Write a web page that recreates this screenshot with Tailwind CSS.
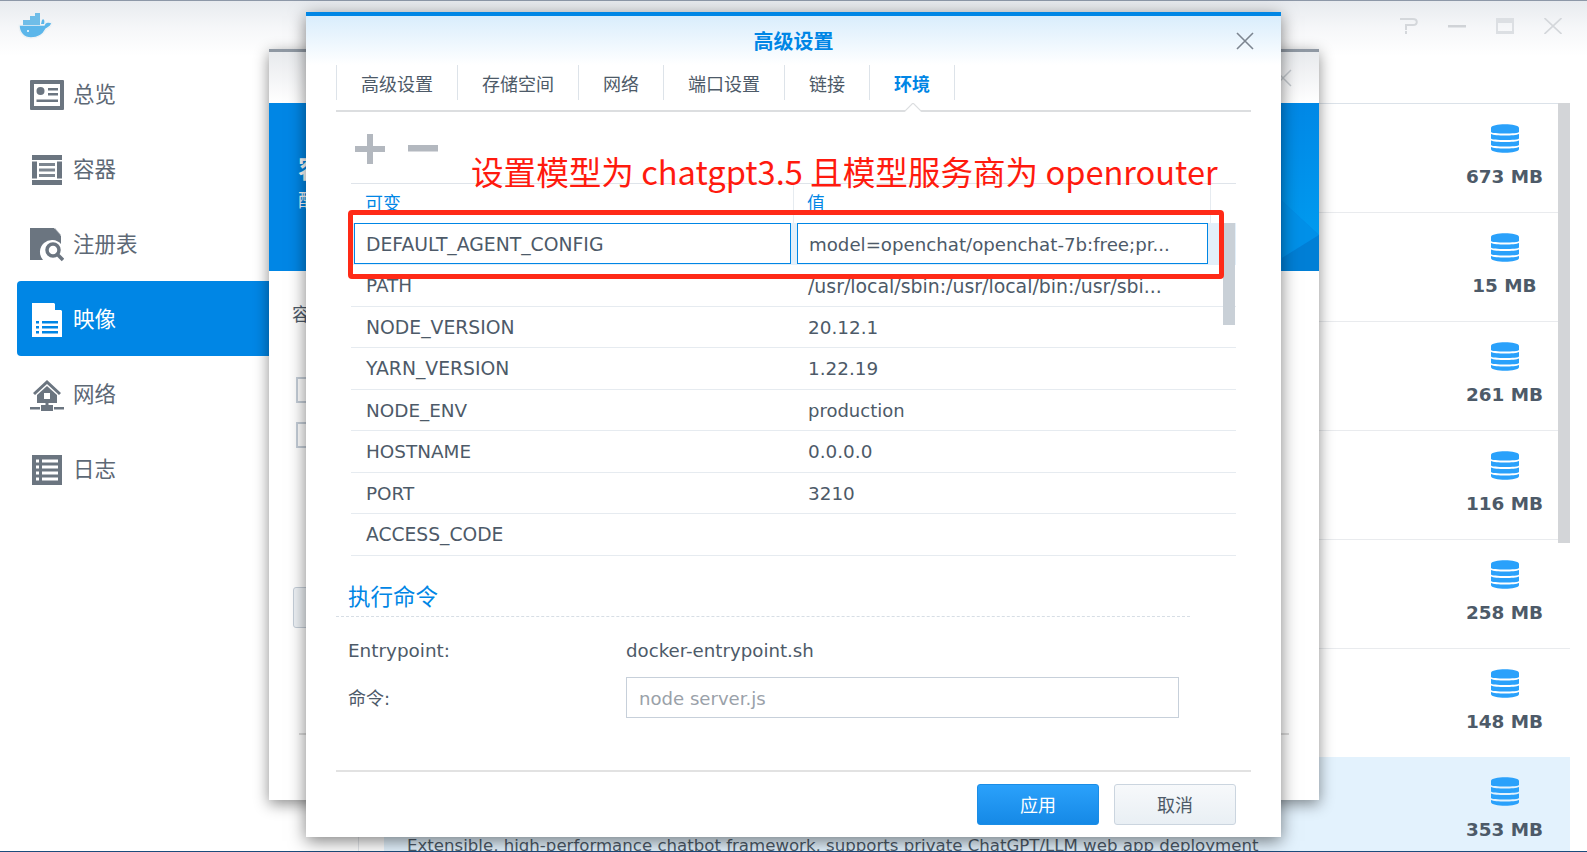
<!DOCTYPE html>
<html lang="zh-CN">
  <head>
    <meta charset="UTF-8" />
    <script src="https://cdn.jsdelivr.net/npm/@tailwindcss/browser@4"></script>
    <title>Docker - 高级设置</title>
  </head>

  <body class="relative w-[1587px] h-[852px] overflow-hidden bg-white text-[18.4px] text-[#4d5a68] font-['DejaVu_Sans','Noto_Sans_CJK_SC',sans-serif]">
    <!-- app title bar -->
    <div class="h-[56px] pb-[6px] border-t border-[#8d98a8] bg-gradient-to-b from-[#e8ebef] via-[#f6f7f9] to-white flex items-center justify-between pl-[18px] pr-[25px]">
      <svg width="35" height="26" viewBox="0 0 35 26">
        <path d="M1 12 H26 C27 9 31 8 34 10 C33 14 30 15 28 16 C25 22 19 25 13 25 C6 25 1 20 1 12 Z" fill="#5cb6ea" stroke="#eef2f5" stroke-width="1.5" />
        <path d="M5 7 H12 V3 H17 V0 H22 V12 H5 Z" fill="#6fbde8" />
        <path d="M24 7 C26 5 27 8 26 11 H23 Z" fill="#5cb6ea" />
        <circle cx="10" cy="18" r="1" fill="#fff" />
      </svg>
      <div class="flex items-center gap-[30px]">
        <svg width="18" height="16" viewBox="0 0 18 16" fill="none" stroke="#d4d7db" stroke-width="2">
          <path d="M0 1 H13 C18 1 18 7 13 7 H6 V12" />
          <path d="M6 13 V16" />
        </svg>
        <svg width="18" height="16" viewBox="0 0 18 16"><rect y="7" width="18" height="2.5" fill="#d0d3d7" /></svg>
        <svg width="18" height="16" viewBox="0 0 18 16">
          <path d="M0 0 H18 V16 H0 Z M2 5 V13 H16 V5 Z" fill="#dcdfe3" fill-rule="evenodd" />
        </svg>
        <svg width="18" height="16" viewBox="0 0 18 16" fill="none" stroke="#d4d7db" stroke-width="1.6">
          <path d="M0.5 0 L17.5 16 M17.5 0 L0.5 16" />
        </svg>
      </div>
    </div>

    <div class="flex h-[795px]">
      <!-- sidebar -->
      <nav class="w-[269px] shrink-0 pl-[17px] text-[21.5px] text-[#5d6875]">
        <a class="h-[75px] pl-[13px] flex items-center gap-[9px]">
          <svg class="mt-[2px]" width="34" height="34" viewBox="0 0 34 34">
            <rect y="2" width="34" height="30" rx="1" fill="#6b7580" />
            <rect x="4" y="6" width="26" height="22" fill="#fff" />
            <circle cx="10.5" cy="13" r="4" fill="#6b7580" />
            <path d="M18 10 H28 V12.5 H18 Z M18 15 H28 V17.5 H18 Z M6.5 21.5 H28 V24 H6.5 Z" fill="#6b7580" />
          </svg>
          <span class="pt-[4px]">总览</span>
        </a>
        <a class="h-[75px] pl-[13px] flex items-center gap-[9px]">
          <svg class="mt-[2px]" width="34" height="34" viewBox="0 0 34 34">
            <path d="M2 2 H32 V7 H2 Z M2 27 H32 V32 H2 Z M2 8.5 H7 V25.5 H2 Z M27 8.5 H32 V25.5 H27 Z" fill="#6b7580" />
            <path d="M9 10 H25 V13 H9 Z M9 15.5 H25 V18.5 H9 Z M9 21 H25 V24 H9 Z" fill="#7d8690" />
          </svg>
          <span class="pt-[4px]">容器</span>
        </a>
        <a class="h-[75px] pl-[13px] flex items-center gap-[9px]">
          <svg class="mt-[2px]" width="34" height="34" viewBox="0 0 34 34">
            <path d="M0 0 H24 L31 8 V16 A11 11 0 0 0 13 32 H0 Z" fill="#6b7580" />
            <path d="M25 0 L31 7 H25 Z" fill="#6b7580" opacity="0.6" />
            <circle cx="23" cy="22" r="6" fill="none" stroke="#6b7580" stroke-width="3.5" />
            <path d="M27 26 L33 32" stroke="#6b7580" stroke-width="3.5" />
          </svg>
          <span class="pt-[4px]">注册表</span>
        </a>
        <a class="h-[75px] pl-[13px] flex items-center gap-[9px] bg-[#0086e5] text-white rounded-l-[4px]">
          <svg class="mt-[2px]" width="34" height="34" viewBox="0 0 34 34">
            <path d="M2 0 H24 L32 8 V34 H2 Z" fill="#fff" />
            <path d="M25 0 L32 7 H25 Z" fill="#0086e5" />
            <path d="M6 18 H9 V20.5 H6 Z M12 18 H28 V20.5 H12 Z M6 23 H9 V25.5 H6 Z M12 23 H28 V25.5 H12 Z M6 28 H9 V30.5 H6 Z M12 28 H28 V30.5 H12 Z" fill="#0086e5" />
          </svg>
          <span class="pt-[4px]">映像</span>
        </a>
        <a class="h-[75px] pl-[13px] flex items-center gap-[9px]">
          <svg class="mt-[2px]" width="34" height="34" viewBox="0 0 34 34">
            <path d="M3 15 L17 2 L31 15 L29 17 L17 6 L5 17 Z" fill="#6b7580" />
            <path d="M7 17 L17 8 L27 17 V25 H7 Z" fill="#6b7580" />
            <rect x="14" y="15" width="6" height="6" fill="#fff" />
            <path d="M0 29 H10 V31.5 H0 Z M24 29 H34 V31.5 H24 Z M11 27 H23 V33 H11 Z M15.5 24 H18.5 V27 H15.5 Z" fill="#6b7580" />
          </svg>
          <span class="pt-[4px]">网络</span>
        </a>
        <a class="h-[75px] pl-[13px] flex items-center gap-[9px]">
          <svg class="mt-[2px]" width="34" height="34" viewBox="0 0 34 34">
            <rect x="2" y="2" width="30" height="30" fill="#6b7580" />
            <path d="M6 6.5 H9 V9.5 H6 Z M12 6.5 H28 V9.5 H12 Z M6 12.5 H9 V15.5 H6 Z M12 12.5 H28 V15.5 H12 Z M6 18.5 H9 V21.5 H6 Z M12 18.5 H28 V21.5 H12 Z M6 24.5 H9 V27.5 H6 Z M12 24.5 H28 V27.5 H12 Z" fill="#fff" />
          </svg>
          <span class="pt-[4px]">日志</span>
        </a>
      </nav>

      <!-- image list -->
      <main class="relative flex-1 pt-[47px] pl-[89px] pr-[17px]">
        <div class="h-[800px] border-l border-[#e3e6ea] pl-[25px]">
          <div class="h-[109px] flex justify-end border-t border-[#dbe2e9]">
            <div class="w-[131px] pt-[20px] flex flex-col items-center gap-[10px] font-bold text-[#4d5a68]">
              <svg width="28" height="29" viewBox="0 0 28 29" fill="#2aa1fb"><path d="M0 4 C0 -1 28 -1 28 4 V8 C28 10 0 10 0 8 Z M0 10 C4 12 24 12 28 10 V14.5 C28 16.5 0 16.5 0 14.5 Z M0 16.5 C4 18.5 24 18.5 28 16.5 V21 C28 23 0 23 0 21 Z M0 23 C4 25 24 25 28 23 V25 C28 30 0 30 0 25 Z" /></svg>
              <span>673 MB</span>
            </div>
          </div>
          <div class="h-[109px] flex justify-end border-t border-[#e9ebee]">
            <div class="w-[131px] pt-[20px] flex flex-col items-center gap-[10px] font-bold text-[#4d5a68]">
              <svg width="28" height="29" viewBox="0 0 28 29" fill="#2aa1fb"><path d="M0 4 C0 -1 28 -1 28 4 V8 C28 10 0 10 0 8 Z M0 10 C4 12 24 12 28 10 V14.5 C28 16.5 0 16.5 0 14.5 Z M0 16.5 C4 18.5 24 18.5 28 16.5 V21 C28 23 0 23 0 21 Z M0 23 C4 25 24 25 28 23 V25 C28 30 0 30 0 25 Z" /></svg>
              <span>15 MB</span>
            </div>
          </div>
          <div class="h-[109px] flex justify-end border-t border-[#e9ebee]">
            <div class="w-[131px] pt-[20px] flex flex-col items-center gap-[10px] font-bold text-[#4d5a68]">
              <svg width="28" height="29" viewBox="0 0 28 29" fill="#2aa1fb"><path d="M0 4 C0 -1 28 -1 28 4 V8 C28 10 0 10 0 8 Z M0 10 C4 12 24 12 28 10 V14.5 C28 16.5 0 16.5 0 14.5 Z M0 16.5 C4 18.5 24 18.5 28 16.5 V21 C28 23 0 23 0 21 Z M0 23 C4 25 24 25 28 23 V25 C28 30 0 30 0 25 Z" /></svg>
              <span>261 MB</span>
            </div>
          </div>
          <div class="h-[109px] flex justify-end border-t border-[#e9ebee]">
            <div class="w-[131px] pt-[20px] flex flex-col items-center gap-[10px] font-bold text-[#4d5a68]">
              <svg width="28" height="29" viewBox="0 0 28 29" fill="#2aa1fb"><path d="M0 4 C0 -1 28 -1 28 4 V8 C28 10 0 10 0 8 Z M0 10 C4 12 24 12 28 10 V14.5 C28 16.5 0 16.5 0 14.5 Z M0 16.5 C4 18.5 24 18.5 28 16.5 V21 C28 23 0 23 0 21 Z M0 23 C4 25 24 25 28 23 V25 C28 30 0 30 0 25 Z" /></svg>
              <span>116 MB</span>
            </div>
          </div>
          <div class="h-[109px] flex justify-end border-t border-[#e9ebee]">
            <div class="w-[131px] pt-[20px] flex flex-col items-center gap-[10px] font-bold text-[#4d5a68]">
              <svg width="28" height="29" viewBox="0 0 28 29" fill="#2aa1fb"><path d="M0 4 C0 -1 28 -1 28 4 V8 C28 10 0 10 0 8 Z M0 10 C4 12 24 12 28 10 V14.5 C28 16.5 0 16.5 0 14.5 Z M0 16.5 C4 18.5 24 18.5 28 16.5 V21 C28 23 0 23 0 21 Z M0 23 C4 25 24 25 28 23 V25 C28 30 0 30 0 25 Z" /></svg>
              <span>258 MB</span>
            </div>
          </div>
          <div class="h-[109px] flex justify-end border-t border-[#e9ebee]">
            <div class="w-[131px] pt-[20px] flex flex-col items-center gap-[10px] font-bold text-[#4d5a68]">
              <svg width="28" height="29" viewBox="0 0 28 29" fill="#2aa1fb"><path d="M0 4 C0 -1 28 -1 28 4 V8 C28 10 0 10 0 8 Z M0 10 C4 12 24 12 28 10 V14.5 C28 16.5 0 16.5 0 14.5 Z M0 16.5 C4 18.5 24 18.5 28 16.5 V21 C28 23 0 23 0 21 Z M0 23 C4 25 24 25 28 23 V25 C28 30 0 30 0 25 Z" /></svg>
              <span>148 MB</span>
            </div>
          </div>
          <div class="h-[109px] flex justify-between bg-[#e3f2fd]">
            <p class="pl-[23px] pt-[77px] whitespace-nowrap text-[16.6px]">Extensible, high-performance chatbot framework, supports private ChatGPT/LLM web app deployment</p>
            <div class="w-[131px] pt-[20px] flex flex-col items-center gap-[10px] font-bold text-[#4d5a68]">
              <svg width="28" height="29" viewBox="0 0 28 29" fill="#2aa1fb"><path d="M0 4 C0 -1 28 -1 28 4 V8 C28 10 0 10 0 8 Z M0 10 C4 12 24 12 28 10 V14.5 C28 16.5 0 16.5 0 14.5 Z M0 16.5 C4 18.5 24 18.5 28 16.5 V21 C28 23 0 23 0 21 Z M0 23 C4 25 24 25 28 23 V25 C28 30 0 30 0 25 Z" /></svg>
              <span>353 MB</span>
            </div>
          </div>
        </div>
        <div class="absolute left-[1289px] top-[47px] w-[12px] h-[440px] bg-[#d3d5d8]"></div>
      </main>
    </div>
    <div class="absolute left-0 bottom-0 w-full h-px bg-[#1d4c7c]"></div>

    <!-- container settings window, mostly hidden behind the dialog -->
    <section class="absolute left-[269px] top-[49px] w-[1050px] h-[751px] bg-white border-t-[3px] border-[#8f98a3] shadow-[0_4px_14px_rgba(0,0,0,0.45)]">
      <div class="h-[51px] bg-gradient-to-b from-[#e8eaed] to-white flex items-center justify-end pr-[27px]">
        <svg width="18" height="18" viewBox="0 0 18 18" fill="none" stroke="#c4c9ce" stroke-width="1.5"><path d="M1 1 L17 17 M17 1 L1 17" /></svg>
      </div>
      <div class="relative h-[168px] bg-[#0086e5] overflow-hidden pl-[29px] pt-[50px] text-white">
        <svg class="absolute inset-0" width="1050" height="168" viewBox="0 0 1050 168">
          <defs>
            <linearGradient id="bannerGlow" x1="0" y1="0" x2="0" y2="1">
              <stop offset="0" stop-color="#0088e6" />
              <stop offset="1" stop-color="#009aef" />
            </linearGradient>
          </defs>
          <polygon points="1013,0 1050,0 1050,132 1013,98" fill="url(#bannerGlow)" />
          <polygon points="1013,98 1050,132 1013,155" fill="#0090e8" />
          <polygon points="1013,155 1050,132 1050,168 1013,168" fill="#007fd6" />
        </svg>
        <p class="relative text-[25px] leading-[34px] font-bold">容器</p>
        <p class="relative text-[18px] leading-[24px] mt-[2px]">配置</p>
      </div>
      <div class="pl-[23px] pt-[32px] text-[18px] leading-[24px]">容器</div>
      <div class="pl-[27px] pt-[50px] flex flex-col gap-[19px]">
        <div class="w-[26px] h-[26px] border-2 border-[#c5ced8] bg-white"></div>
        <div class="w-[26px] h-[26px] border-2 border-[#c5ced8] bg-white"></div>
      </div>
      <div class="ml-[24px] mt-[139px] w-[60px] h-[41px] rounded-[3px] border border-[#c5ced8] bg-[#eef2f6]"></div>
      <div class="mx-[30px] mt-[105px] h-[2px] bg-[#dcdcdc]"></div>
    </section>

    <!-- advanced settings dialog -->
    <section class="absolute left-[306px] top-[12px] w-[975px] h-[825px] bg-white border-t-4 border-[#0086e5] shadow-[0_4px_16px_rgba(0,0,0,0.5)] flex flex-col">
      <header class="relative h-[49px] shrink-0 bg-gradient-to-b from-[#d9edfc] to-white flex items-center justify-center pt-[2px]">
        <h1 class="text-[20px] font-bold text-[#0086e5]">高级设置</h1>
        <svg class="absolute right-[27px] top-[16px]" width="18" height="18" viewBox="0 0 18 18" fill="none" stroke="#7c8590" stroke-width="1.6"><path d="M1 1 L17 17 M17 1 L1 17" /></svg>
      </header>

      <div class="relative mx-[30px] h-[47px] shrink-0 border-b-2 border-[#dcdee0] text-[18px]">
        <div class="flex h-[35px] items-center">
          <a class="w-[121px] h-full text-center leading-[39px] border-l border-[#dde3e9]">高级设置</a>
          <a class="w-[121px] h-full text-center leading-[39px] border-l border-[#dde3e9]">存储空间</a>
          <a class="w-[85px] h-full text-center leading-[39px] border-l border-[#dde3e9]">网络</a>
          <a class="w-[121px] h-full text-center leading-[39px] border-l border-[#dde3e9]">端口设置</a>
          <a class="w-[85px] h-full text-center leading-[39px] border-l border-[#dde3e9]">链接</a>
          <a class="w-[86px] h-full text-center leading-[39px] border-x border-[#dde3e9] font-bold text-[#0086e5]">环境</a>
        </div>
        <svg class="absolute left-[568px] top-[38px]" width="18" height="9" viewBox="0 0 18 9"><path d="M0 9 L9 0 L18 9 Z" fill="#fff" /><path d="M0 9 L9 0 L18 9" fill="none" stroke="#dcdee0" stroke-width="1.2" /></svg>
      </div>

      <div class="ml-[49px] mt-[22px] h-[30px] shrink-0 flex gap-[23px]">
        <svg width="30" height="30" viewBox="0 0 30 30" fill="#b3b8bf"><path d="M12 0 H18 V12 H30 V18 H18 V30 H12 V18 H0 V12 H12 Z" /></svg>
        <svg width="30" height="30" viewBox="0 0 30 30" fill="#b3b8bf"><rect y="11" width="30" height="6.5" /></svg>
      </div>

      <!-- environment table -->
      <div class="relative ml-[45px] w-[885px] mt-[19px] shrink-0">
        <div class="h-[40px] flex border-t border-[#dfe4ea] text-[#0086e5] text-[18px]">
          <div class="w-[443px] h-full pl-[14px] pt-[6px] border-r border-[#e6ebf0]">可变</div>
          <div class="w-[417px] h-full pl-[13px] pt-[6px] border-r border-[#e6ebf0]">值</div>
        </div>
        <div class="h-[42px] flex bg-[#e3eff9] pl-[3px] gap-[6px]">
          <div class="w-[437px] h-[41px] pl-[11px] leading-[41px] text-[18.8px] bg-white border border-[#0086e5]">DEFAULT_AGENT_CONFIG</div>
          <div class="w-[411px] h-[41px] pl-[11px] leading-[41px] text-[18.2px] bg-white border border-[#0086e5]">model=openchat/openchat-7b:free;pr...</div>
        </div>
        <div class="h-[41.5px] flex items-center pl-[15px] pt-[2px] border-b border-[#e6ebf0]"><span class="w-[442px]">PATH</span><span class="text-[18.9px]">/usr/local/sbin:/usr/local/bin:/usr/sbi...</span></div>
        <div class="h-[41.5px] flex items-center pl-[15px] pt-[2px] border-b border-[#e6ebf0]"><span class="w-[442px] text-[18.8px]">NODE_VERSION</span><span>20.12.1</span></div>
        <div class="h-[41.5px] flex items-center pl-[15px] pt-[2px] border-b border-[#e6ebf0]"><span class="w-[442px] text-[18.8px]">YARN_VERSION</span><span>1.22.19</span></div>
        <div class="h-[41.5px] flex items-center pl-[15px] pt-[2px] border-b border-[#e6ebf0]"><span class="w-[442px]">NODE_ENV</span><span class="text-[18px]">production</span></div>
        <div class="h-[41.5px] flex items-center pl-[15px] pt-[2px] border-b border-[#e6ebf0]"><span class="w-[442px]">HOSTNAME</span><span>0.0.0.0</span></div>
        <div class="h-[41.5px] flex items-center pl-[15px] pt-[2px] border-b border-[#e6ebf0]"><span class="w-[442px]">PORT</span><span>3210</span></div>
        <div class="h-[41.5px] flex items-center pl-[15px] pt-[2px] border-b border-[#e6ebf0]"><span class="w-[442px] text-[18.7px]">ACCESS_CODE</span><span></span></div>
        <div class="absolute left-[872px] top-[40px] w-[12px] h-[102px] bg-[#c9d0d7]"></div>

        <!-- red annotation drawn over the table -->
        <p class="absolute left-[120px] -top-[34px] whitespace-nowrap text-[32.6px] leading-[44px] text-[#ff1a0e] font-['Noto_Sans_CJK_SC',sans-serif]">设置模型为 chatgpt3.5 且模型服务商为 openrouter</p>
        <div class="absolute -left-[3px] top-[27px] w-[876px] h-[69px] border-[5px] border-[#ff2a17] rounded-[4px]"></div>
      </div>

      <!-- command section -->
      <div class="ml-[30px] w-[854px] h-[61px] shrink-0 border-b border-dashed border-[#d7dee5] pl-[12px] flex items-end pb-[1px] text-[22.5px] text-[#0086e5]">执行命令</div>
      <div class="ml-[42px] mt-[22px] h-[24px] shrink-0 flex items-center"><span class="w-[278px]">Entrypoint:</span><span class="text-[18.2px]">docker-entrypoint.sh</span></div>
      <div class="ml-[42px] mt-[14px] h-[41px] shrink-0 flex items-center">
        <span class="w-[278px] text-[18px] pt-[2px]">命令:</span>
        <div class="w-[553px] h-full pl-[12px] leading-[41px] text-[18.1px] border border-[#c7d0da] text-[#9aa1a9]">node server.js</div>
      </div>

      <footer class="mx-[30px] mt-[52px] pt-[12px] shrink-0 border-t-2 border-[#e2e2e2] flex justify-end gap-[15px] pr-[15px] text-[18px]">
        <button class="w-[122px] h-[41px] pt-[2px] rounded-[3px] border border-[#1a8de6] bg-gradient-to-b from-[#2aa1fb] to-[#1589e6] text-white">应用</button>
        <button class="w-[122px] h-[41px] pt-[2px] rounded-[3px] border border-[#cbd5df] bg-gradient-to-b from-[#f7f9fb] to-[#e9eff4]">取消</button>
      </footer>
    </section>
  </body>
</html>
